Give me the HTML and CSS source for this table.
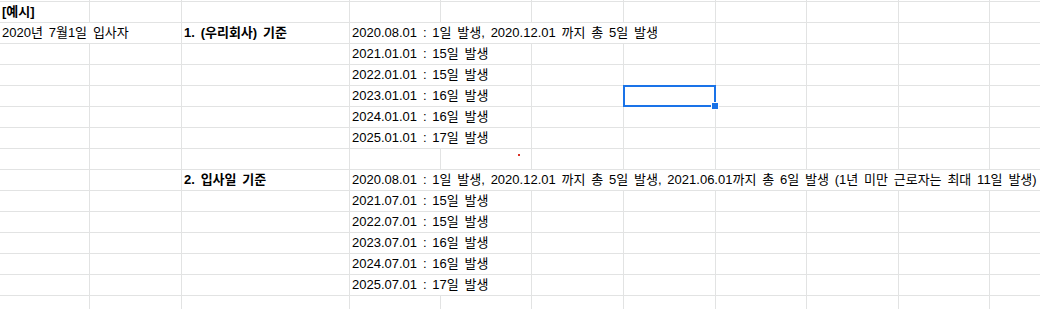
FILE: index.html
```html
<!DOCTYPE html>
<html lang="ko">
<head>
<meta charset="utf-8">
<title>예시</title>
<link rel="stylesheet" href="styles.css">
</head>
<body>
<div class="sheet">
  <div class="row strip"><div class="c"></div><div class="c"></div><div class="c"></div><div class="c"></div><div class="c"></div><div class="c"></div><div class="c"></div><div class="c"></div><div class="c"></div><div class="c"></div><div class="c"></div></div>

  <div class="row"><div class="c b">[예시]</div><div class="c"></div><div class="c"></div><div class="c"></div><div class="c"></div><div class="c"></div><div class="c"></div><div class="c"></div><div class="c"></div><div class="c"></div><div class="c"></div></div>

  <div class="row"><div class="c s2">2020년 7월1일 입사자</div><div class="c b">1. (우리회사) 기준</div><div class="c s4">2020.08.01 : 1일 발생, 2020.12.01 까지 총 5일 발생</div><div class="c"></div><div class="c"></div><div class="c"></div><div class="c"></div></div>

  <div class="row"><div class="c"></div><div class="c"></div><div class="c"></div><div class="c s2">2021.01.01 : 15일 발생</div><div class="c"></div><div class="c"></div><div class="c"></div><div class="c"></div><div class="c"></div><div class="c"></div></div>

  <div class="row"><div class="c"></div><div class="c"></div><div class="c"></div><div class="c s2">2022.01.01 : 15일 발생</div><div class="c"></div><div class="c"></div><div class="c"></div><div class="c"></div><div class="c"></div><div class="c"></div></div>

  <div class="row"><div class="c"></div><div class="c"></div><div class="c"></div><div class="c s2">2023.01.01 : 16일 발생</div><div class="c"></div><div class="c sel"><span class="sel-box"><span class="sel-handle"></span></span></div><div class="c"></div><div class="c"></div><div class="c"></div><div class="c"></div></div>

  <div class="row"><div class="c"></div><div class="c"></div><div class="c"></div><div class="c s2">2024.01.01 : 16일 발생</div><div class="c"></div><div class="c"></div><div class="c"></div><div class="c"></div><div class="c"></div><div class="c"></div></div>

  <div class="row"><div class="c"></div><div class="c"></div><div class="c"></div><div class="c s2">2025.01.01 : 17일 발생</div><div class="c"></div><div class="c"></div><div class="c"></div><div class="c"></div><div class="c"></div><div class="c"></div></div>

  <div class="row"><div class="c"></div><div class="c"></div><div class="c"></div><div class="c"></div><div class="c mark"><span class="dot"></span></div><div class="c"></div><div class="c"></div><div class="c"></div><div class="c"></div><div class="c"></div><div class="c"></div></div>

  <div class="row"><div class="c"></div><div class="c"></div><div class="c b">2. 입사일 기준</div><div class="c s8">2020.08.01 : 1일 발생, 2020.12.01 까지 총 5일 발생, 2021.06.01까지 총 6일 발생 (1년 미만 근로자는 최대 11일 발생)</div></div>

  <div class="row"><div class="c"></div><div class="c"></div><div class="c"></div><div class="c s2">2021.07.01 : 15일 발생</div><div class="c"></div><div class="c"></div><div class="c"></div><div class="c"></div><div class="c"></div><div class="c"></div></div>

  <div class="row"><div class="c"></div><div class="c"></div><div class="c"></div><div class="c s2">2022.07.01 : 15일 발생</div><div class="c"></div><div class="c"></div><div class="c"></div><div class="c"></div><div class="c"></div><div class="c"></div></div>

  <div class="row"><div class="c"></div><div class="c"></div><div class="c"></div><div class="c s2">2023.07.01 : 16일 발생</div><div class="c"></div><div class="c"></div><div class="c"></div><div class="c"></div><div class="c"></div><div class="c"></div></div>

  <div class="row"><div class="c"></div><div class="c"></div><div class="c"></div><div class="c s2">2024.07.01 : 16일 발생</div><div class="c"></div><div class="c"></div><div class="c"></div><div class="c"></div><div class="c"></div><div class="c"></div></div>

  <div class="row"><div class="c"></div><div class="c"></div><div class="c"></div><div class="c s2">2025.07.01 : 17일 발생</div><div class="c"></div><div class="c"></div><div class="c"></div><div class="c"></div><div class="c"></div><div class="c"></div></div>

  <div class="row"><div class="c"></div><div class="c"></div><div class="c"></div><div class="c"></div><div class="c"></div><div class="c"></div><div class="c"></div><div class="c"></div><div class="c"></div><div class="c"></div><div class="c"></div></div>
</div>
</body>
</html>
```

FILE: styles.css
```css
html, body {
  margin: 0;
  padding: 0;
  background: #ffffff;
  overflow: hidden;
}

.sheet {
  width: 1082px;
  font-family: "Liberation Sans", "Noto Sans CJK KR", sans-serif;
  font-size: 13px;
  word-spacing: 2.2px;
  color: #000000;
}

.row {
  display: grid;
  grid-template-columns: 90px 92px 168px 91px 91px 92px 92px 91px 92px 91px 92px;
}

.c {
  box-sizing: border-box;
  height: 21px;
  line-height: 20px;
  padding-left: 2px;
  border-right: 1px solid #e2e3e3;
  border-bottom: 1px solid #e2e3e3;
  white-space: nowrap;
  overflow: visible;
}

.strip .c {
  height: 2px;
}

.b {
  font-weight: bold;
}

.s2 { grid-column: span 2; }
.s4 { grid-column: span 4; }
.s8 { grid-column: span 8; }

.sel,
.mark {
  position: relative;
}

.sel-box {
  position: absolute;
  left: -1px;
  top: -1px;
  width: 93px;
  height: 22px;
  box-sizing: border-box;
  border: 2px solid #1a73e8;
}

.sel-handle {
  position: absolute;
  right: -5px;
  bottom: -5px;
  width: 6px;
  height: 6px;
  background: #1a73e8;
  border: 1px solid #ffffff;
  box-sizing: content-box;
}

.dot {
  position: absolute;
  left: 77px;
  top: 5px;
  width: 2px;
  height: 2px;
  background: #d93025;
}
```
